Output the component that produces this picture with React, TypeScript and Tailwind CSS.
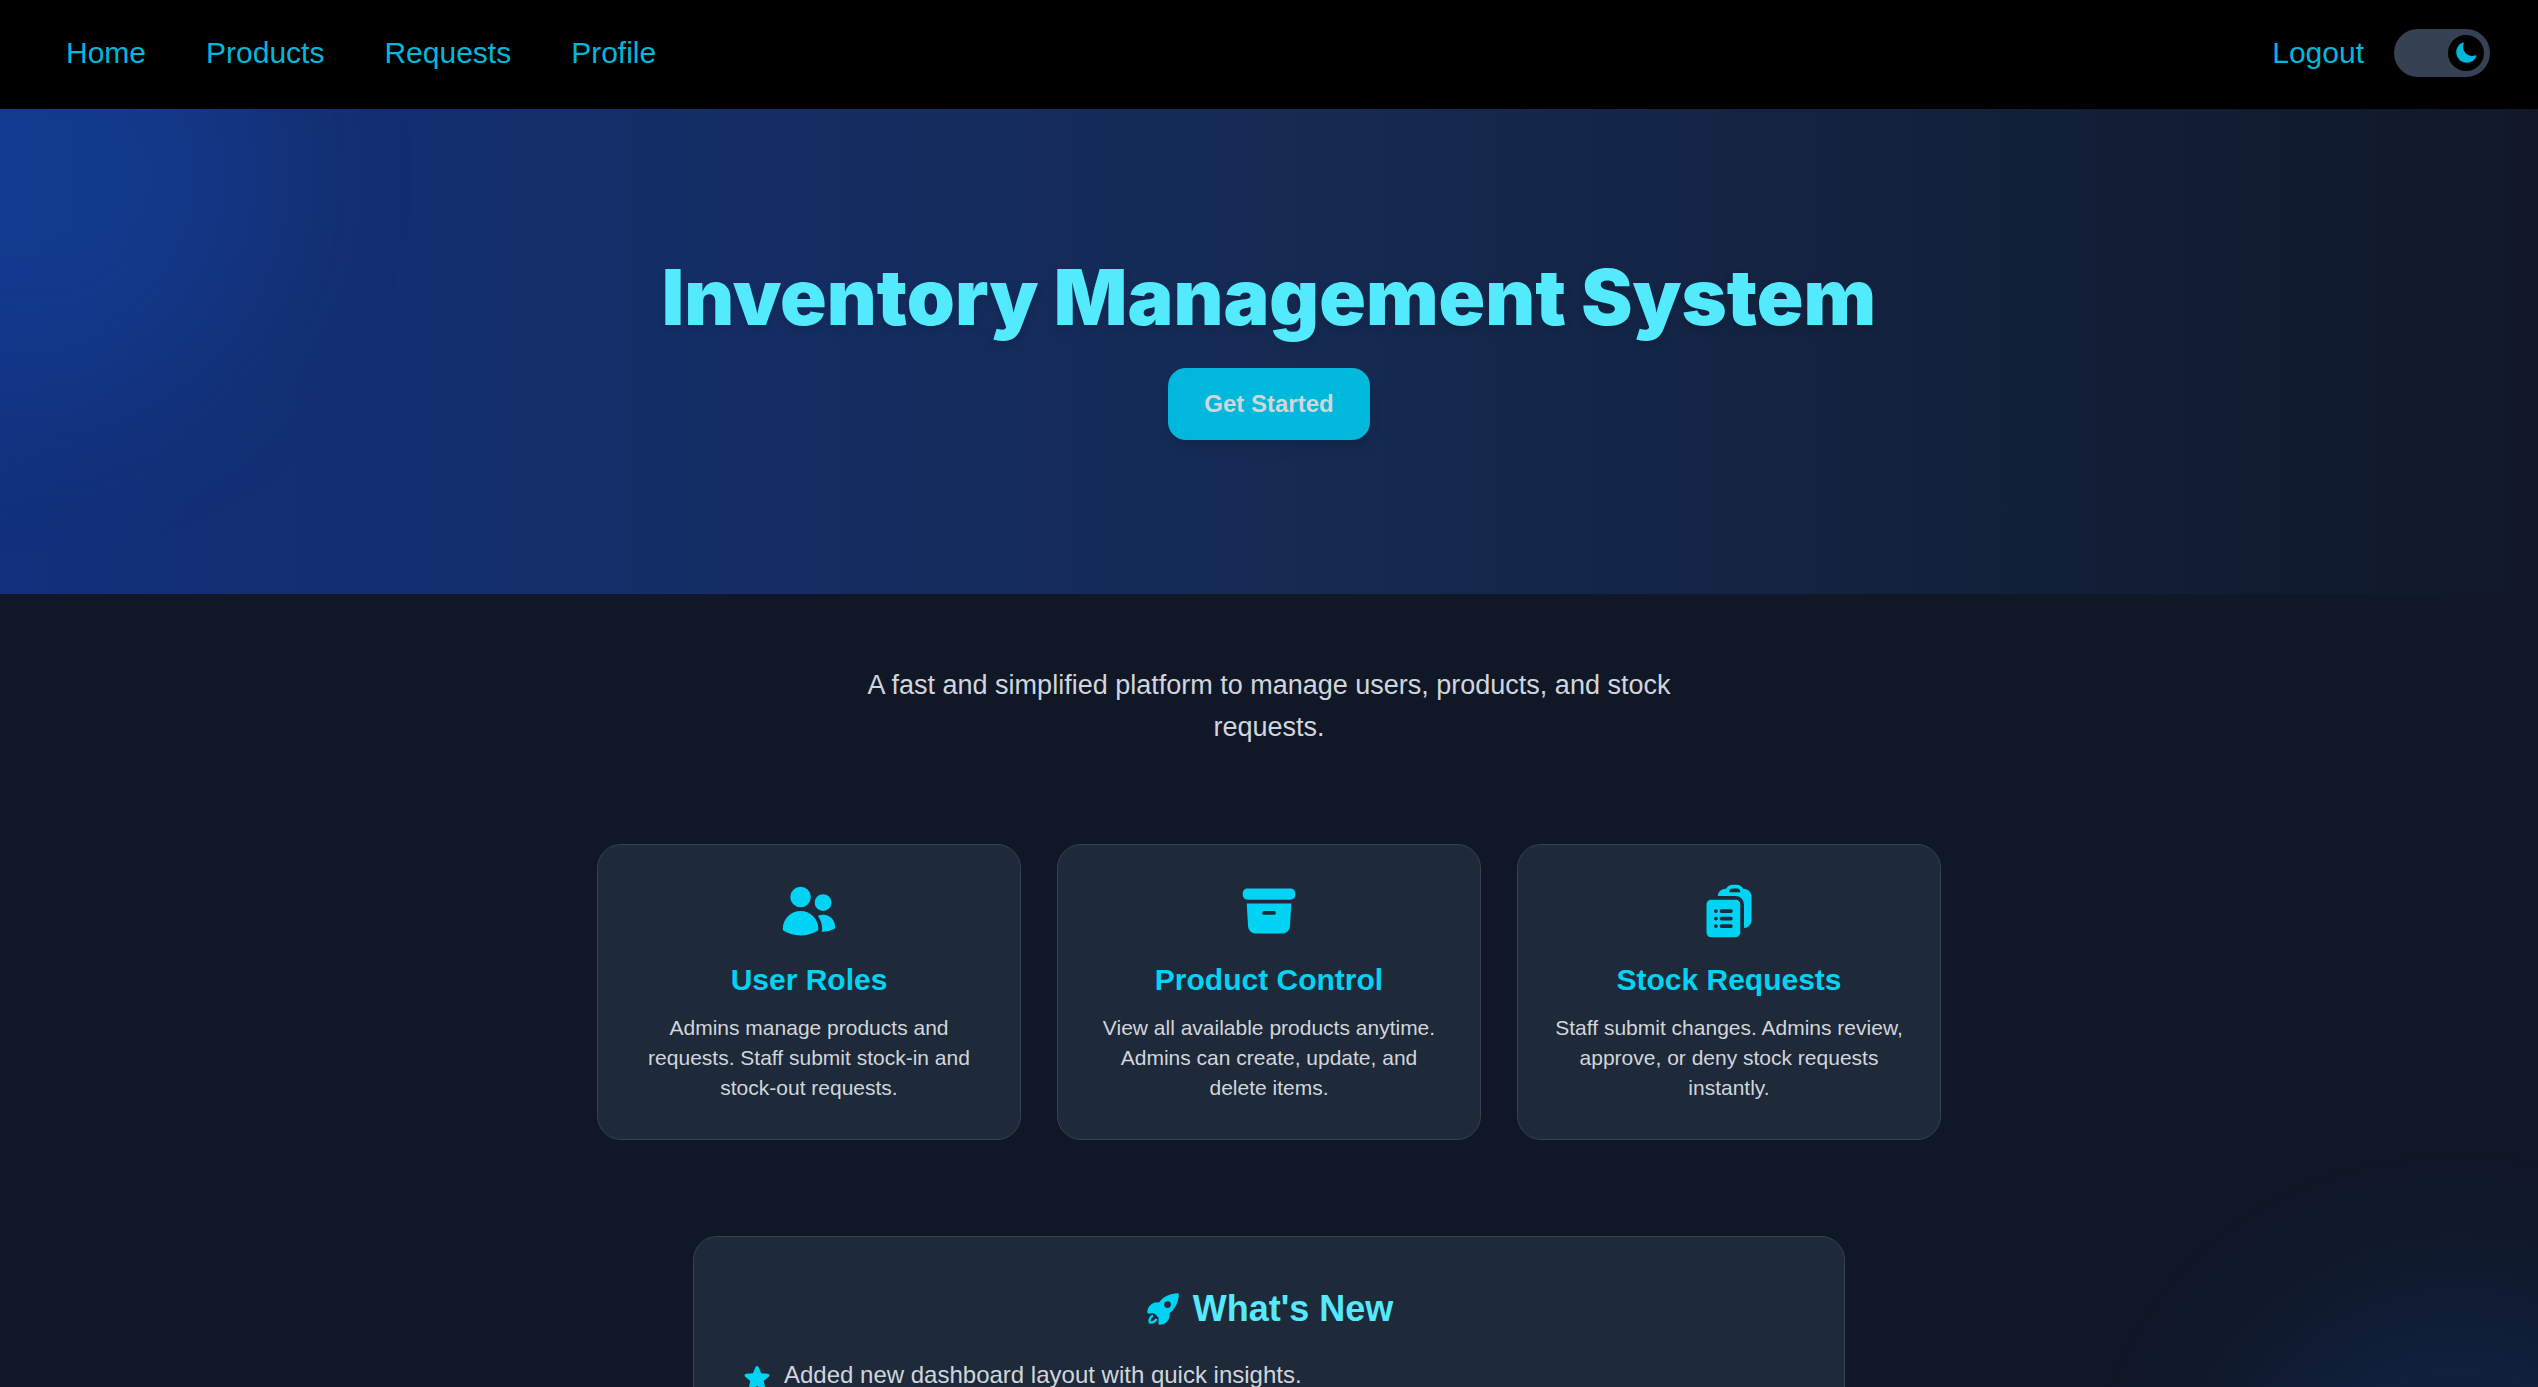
import React from "react";
import {
  HiArchiveBox,
  HiClipboardDocumentList,
  HiMoon,
  HiRocketLaunch,
  HiStar,
  HiUsers,
} from "react-icons/hi2";
import type { IconType } from "react-icons";

type FeatureProps = {
  icon: IconType;
  title: string;
  description: string;
};

const links = ["Home", "Products", "Requests", "Profile"];

const features: FeatureProps[] = [
  {
    icon: HiUsers,
    title: "User Roles",
    description:
      "Admins manage products and requests. Staff submit stock-in and stock-out requests.",
  },
  {
    icon: HiArchiveBox,
    title: "Product Control",
    description:
      "View all available products anytime. Admins can create, update, and delete items.",
  },
  {
    icon: HiClipboardDocumentList,
    title: "Stock Requests",
    description:
      "Staff submit changes. Admins review, approve, or deny stock requests instantly.",
  },
];

const news = ["Added new dashboard layout with quick insights."];

const Navbar: React.FC = () => {
  return (
    <nav className="relative z-10 flex items-center justify-between bg-black px-12 pt-[29px] pb-8 text-[30px] leading-[48px] text-[#00b8db]">
      <div className="flex gap-6">
        {links.map((link) => (
          <a key={link} href={`#${link.toLowerCase()}`} className="px-[18px] hover:text-cyan-300">
            {link}
          </a>
        ))}
      </div>
      <div className="flex items-center gap-3">
        <button type="button" className="cursor-pointer px-[18px] hover:text-cyan-300">
          Logout
        </button>
        <button
          type="button"
          role="switch"
          aria-checked="true"
          aria-label="Dark mode"
          className="flex h-12 w-24 cursor-pointer items-center justify-end rounded-full bg-[#364153] p-1.5"
        >
          <span className="flex size-9 items-center justify-center rounded-full bg-black">
            <HiMoon className="size-6" />
          </span>
        </button>
      </div>
    </nav>
  );
};

const FeatureCard: React.FC<FeatureProps> = ({ icon: Icon, title, description }) => {
  return (
    <div className="flex flex-col items-center rounded-3xl border border-[#364153] bg-[#1e2939] p-9 text-center">
      <Icon className="mb-[18px] size-15 text-[#00d3f3]" />
      <h3 className="mb-3 text-[30px] leading-[42px] font-semibold text-[#00d3f3]">{title}</h3>
      <p className="text-[21px] leading-[30px]">{description}</p>
    </div>
  );
};

export default function App() {
  return (
    <div className="relative h-screen overflow-hidden bg-[#101828] font-['Liberation_Sans',Arial,sans-serif] text-gray-300">
      <Navbar />

      <header className="relative flex flex-col items-center overflow-hidden bg-linear-to-r from-[#12307c] via-[#152b54] to-[#101828] px-9 pt-[145px] pb-[154px]">
        {/* Soft glow in the top left corner */}
        <div className="absolute -top-40 -left-48 size-[456px] rounded-full bg-[#1559c8]/25 blur-[72px]"></div>
        <h1 className="relative text-center font-['Arial_Black',Inter,sans-serif] text-[77px] leading-[86px] font-black text-[#53eafd] drop-shadow-lg">
          Inventory Management System
        </h1>
        <button
          type="button"
          className="relative mt-7 cursor-pointer rounded-[18px] bg-[#00b8db] px-9 py-[18px] text-2xl leading-9 font-semibold shadow-lg"
        >
          Get Started
        </button>
      </header>

      <main className="relative flex flex-col items-center px-9 pt-[70px]">
        <p className="max-w-[864px] text-center text-[27px] leading-[42px]">
          A fast and simplified platform to manage users, products, and stock requests.
        </p>

        <section className="mt-24 grid w-full max-w-[1344px] grid-cols-3 gap-9">
          {features.map((feature) => (
            <FeatureCard key={feature.title} {...feature} />
          ))}
        </section>

        <section className="mt-24 w-full max-w-[1152px] rounded-3xl border border-[#364153] bg-[#1e2939] p-12">
          <h2 className="flex items-center justify-center gap-3 text-4xl leading-[48px] font-bold text-[#53eafd]">
            <HiRocketLaunch className="size-9 text-[#00d3f3]" />
            What's New
          </h2>
          <ul className="mt-6">
            {news.map((item) => (
              <li key={item} className="flex items-start gap-3 text-2xl leading-9">
                <HiStar className="mt-1.5 size-[30px] text-[#00d3f3]" />
                {item}
              </li>
            ))}
          </ul>
        </section>
      </main>

      <div className="absolute -right-40 -bottom-96 size-[480px] rounded-full bg-[#1559c8]/15 blur-[72px]"></div>
    </div>
  );
}
